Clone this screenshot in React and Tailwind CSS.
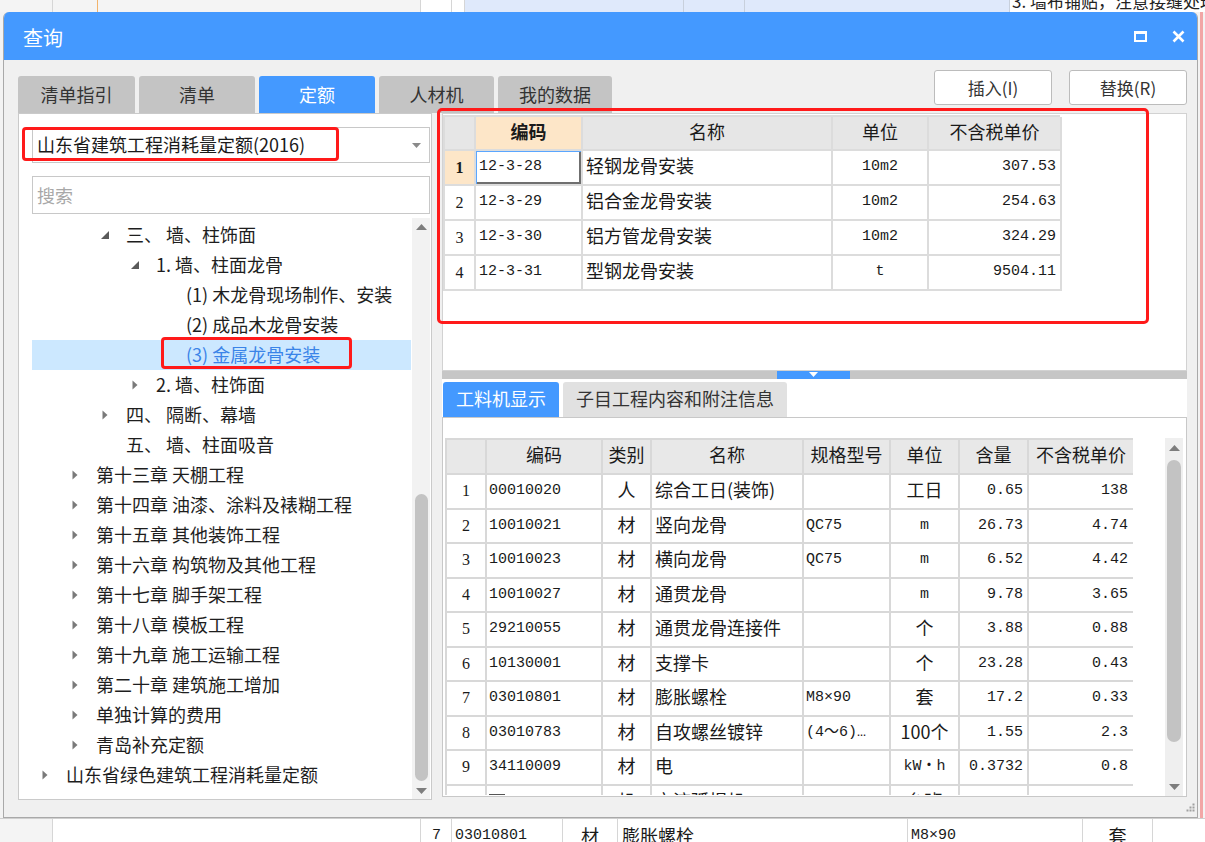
import React from "react";

const treeRows = [
  { l: 2, a: "open", t: "三、 墙、柱饰面" },
  { l: 3, a: "open", t: "1. 墙、柱面龙骨" },
  { l: 4, t: "(1) 木龙骨现场制作、安装" },
  { l: 4, t: "(2) 成品木龙骨安装" },
  { l: 4, t: "(3) 金属龙骨安装", sel: true },
  { l: 3, a: "closed", t: "2. 墙、柱饰面" },
  { l: 2, a: "closed", t: "四、 隔断、幕墙" },
  { l: 2, t: "五、 墙、柱面吸音" },
  { l: 1, a: "closed", t: "第十三章 天棚工程" },
  { l: 1, a: "closed", t: "第十四章 油漆、涂料及裱糊工程" },
  { l: 1, a: "closed", t: "第十五章 其他装饰工程" },
  { l: 1, a: "closed", t: "第十六章 构筑物及其他工程" },
  { l: 1, a: "closed", t: "第十七章 脚手架工程" },
  { l: 1, a: "closed", t: "第十八章 模板工程" },
  { l: 1, a: "closed", t: "第十九章 施工运输工程" },
  { l: 1, a: "closed", t: "第二十章 建筑施工增加" },
  { l: 1, a: "closed", t: "单独计算的费用" },
  { l: 1, a: "closed", t: "青岛补充定额" },
  { l: 0, a: "closed", t: "山东省绿色建筑工程消耗量定额" },
];

const indentCls = ["w-0", "w-[30px]", "w-[60px]", "w-[90px]", "w-[120px]"];

const topRows = [
  ["1", "12-3-28", "轻钢龙骨安装", "10m2", "307.53"],
  ["2", "12-3-29", "铝合金龙骨安装", "10m2", "254.63"],
  ["3", "12-3-30", "铝方管龙骨安装", "10m2", "324.29"],
  ["4", "12-3-31", "型钢龙骨安装", "t", "9504.11"],
];

// [no, code, type, name, spec, unit, unitIsCjk, qty, price]
const matRows = [
  ["1", "00010020", "人", "综合工日(装饰)", "", "工日", true, "0.65", "138"],
  ["2", "10010021", "材", "竖向龙骨", "QC75", "m", false, "26.73", "4.74"],
  ["3", "10010023", "材", "横向龙骨", "QC75", "m", false, "6.52", "4.42"],
  ["4", "10010027", "材", "通贯龙骨", "", "m", false, "9.78", "3.65"],
  ["5", "29210055", "材", "通贯龙骨连接件", "", "个", true, "3.88", "0.88"],
  ["6", "10130001", "材", "支撑卡", "", "个", true, "23.28", "0.43"],
  ["7", "03010801", "材", "膨胀螺栓", "M8×90", "套", true, "17.2", "0.33"],
  ["8", "03010783", "材", "自攻螺丝镀锌", "(4～6)…", "100个", true, "1.55", "2.3"],
  ["9", "34110009", "材", "电", "", "kW・h", false, "0.3732", "0.8"],
  ["10", "99250010", "机", "交流弧焊机", "", "台班", true, "0.034", "1.43"],
];

function OpenArrow() {
  return (
    <svg width="8" height="8" viewBox="0 0 8 8">
      <path d="M8 0 L8 8 L0 8 Z" fill="#5a5a5a" />
    </svg>
  );
}

function ClosedArrow() {
  return (
    <svg width="6" height="10" viewBox="0 0 6 10">
      <path d="M0.5 0.5 L5.5 5 L0.5 9.5 Z" fill="#7a7a7a" />
    </svg>
  );
}

function ScrollArrow({ up }) {
  return (
    <svg width="11" height="6" viewBox="0 0 11 6">
      <path d={up ? "M0 6 L5.5 0 L11 6 Z" : "M0 0 L5.5 6 L11 0 Z"} fill="#7d7d7d" />
    </svg>
  );
}

function TreePanel() {
  return (
    <div className="w-[414px] h-[687px] shrink-0 bg-white border border-[#cacaca] flex flex-col pl-[13px] pr-[1px] pt-[13px]">
      {/* library selector */}
      <div className="relative h-[36px] border border-[#c8c8c8] flex items-center pl-[4px]">
        <span className="text-[18px] leading-none text-[#1a1a1a] whitespace-nowrap pb-[2px]">山东省建筑工程消耗量定额(2016)</span>
        <svg className="ml-auto mr-[8px]" width="9" height="5" viewBox="0 0 9 5">
          <path d="M0 0 L4.5 5 L9 0 Z" fill="#8a8a8a" />
        </svg>
        <div className="absolute -left-[11px] -top-[1px] w-[317px] h-[34px] border-[3px] border-[#ff1a1a] rounded-[4px]" />
      </div>
      <div className="mt-[13px] h-[38px] border border-[#c8c8c8] flex items-center pl-[4px]">
        <span className="text-[18px] leading-none text-[#a8a8a8]">搜索</span>
      </div>
      <div className="mt-[4px] flex-1 flex">
        <div className="w-[379px] pt-[2px]">
          {treeRows.map((r, i) => (
            <div
              key={i}
              className={`relative h-[30px] flex items-center ${r.sel ? "bg-[#cce8ff] text-[#3a84e8]" : "text-[#1e1e1e]"}`}
            >
              <div className={`${indentCls[r.l]} shrink-0`} />
              <div className="w-[26px] shrink-0 flex justify-center">
                {r.a === "open" && <OpenArrow />}
                {r.a === "closed" && <ClosedArrow />}
              </div>
              <span className="ml-[8px] pb-[2px] text-[18px] leading-none whitespace-nowrap">{r.t}</span>
              {r.sel && (
                <div className="absolute left-[129px] -top-[3px] w-[191px] h-[32px] border-[3px] border-[#ff1a1a] rounded-[4px]" />
              )}
            </div>
          ))}
        </div>
        <div className="ml-[1px] w-[18px] bg-[#f2f2f2] flex flex-col items-center">
          <div className="h-[18px] flex items-center justify-center">
            <ScrollArrow up />
          </div>
          <div className="mt-[258px] w-[13px] h-[287px] rounded-full bg-[#c3c3c3]" />
          <div className="mt-auto h-[16px] flex items-center justify-center">
            <ScrollArrow />
          </div>
        </div>
      </div>
    </div>
  );
}

function QuotaTable() {
  const head = "h-[34px] pb-[4px] border-r-2 border-b-2 border-[#dcdcdc] flex items-center justify-center text-[18px] leading-none";
  const cell = "h-[35px] border-r-2 border-b-2 border-[#dcdcdc] flex items-center leading-none";
  return (
    <div className="grid grid-cols-[31px_107px_250px_96px_133px] w-[617px] border-l-2 border-t-2 border-[#dcdcdc] text-[#1a1a1a]">
      <div className={`${head} bg-[#e6e6e6]`} />
      <div className={`${head} bg-[#fde6c8] font-bold`}>编码</div>
      <div className={`${head} bg-[#e6e6e6]`}>名称</div>
      <div className={`${head} bg-[#e6e6e6]`}>单位</div>
      <div className={`${head} bg-[#e6e6e6]`}>不含税单价</div>
      {topRows.map((r, i) => (
        <React.Fragment key={i}>
          <div
            className={`${cell} justify-center text-[16px] font-['Liberation_Serif',serif] ${i === 0 ? "bg-[#fde6c8] font-bold" : "bg-white"}`}
          >
            {r[0]}
          </div>
          <div
            className={`${cell} pl-[3px] pb-[2px] text-[15px] font-['Liberation_Mono',monospace] ${i === 0 ? "shadow-[inset_1px_1px_0_#5aa6ff,inset_-2px_-2px_0_#6f6f6f]" : ""}`}
          >
            {r[1]}
          </div>
          <div className={`${cell} pl-[3px] pb-[5px] text-[18px]`}>{r[2]}</div>
          <div className={`${cell} justify-center pb-[2px] text-[15px] font-['Liberation_Mono',monospace]`}>{r[3]}</div>
          <div className={`${cell} justify-end pr-[4px] pb-[2px] text-[15px] font-['Liberation_Mono',monospace]`}>{r[4]}</div>
        </React.Fragment>
      ))}
    </div>
  );
}

function MaterialTable() {
  const head = "h-[35px] pb-[5px] border-r-2 border-b-2 border-[#d8d8d8] bg-[#e8e8e8] flex items-center justify-center text-[18px] leading-none";
  const cell = "h-[34.5px] border-r-2 border-b-2 border-[#d8d8d8] flex items-center leading-none overflow-hidden whitespace-nowrap";
  const mono = "font-['Liberation_Mono','Noto_Sans_CJK_SC',monospace] text-[15px]";
  return (
    <div className="w-[688px] h-[357px] overflow-hidden">
      <div className="grid grid-cols-[40px_116px_49px_152px_87px_69px_69px_106px] border-l-2 border-t-2 border-[#d8d8d8] text-[#1a1a1a]">
        <div className={head} />
        <div className={head}>编码</div>
        <div className={head}>类别</div>
        <div className={head}>名称</div>
        <div className={head}>规格型号</div>
        <div className={head}>单位</div>
        <div className={head}>含量</div>
        <div className={head}>不含税单价</div>
        {matRows.map((r, i) => (
          <React.Fragment key={i}>
            <div className={`${cell} justify-center text-[16px] font-['Liberation_Serif',serif]`}>{i < 9 ? r[0] : ""}</div>
            <div className={`${cell} pl-[2px] pb-[1px] ${mono}`}>
              {i === 9 && <span className="mr-[6px] w-[16px] h-[14px] border border-[#555] inline-block" />}
              {r[1]}
            </div>
            <div className={`${cell} justify-center pb-[4px] text-[18px]`}>{r[2]}</div>
            <div className={`${cell} pl-[3px] pb-[4px] text-[18px]`}>{r[3]}</div>
            <div className={`${cell} pl-[2px] pb-[1px] ${mono}`}>{r[4]}</div>
            <div className={`${cell} justify-center ${r[6] ? "pb-[4px] text-[18px]" : "pb-[1px] " + mono}`}>{r[5]}</div>
            <div className={`${cell} justify-end pr-[4px] pb-[1px] ${mono}`}>{r[7]}</div>
            <div className={`${cell} justify-end pr-[5px] pb-[1px] ${mono}`}>{r[8]}</div>
          </React.Fragment>
        ))}
      </div>
    </div>
  );
}

function Dialog() {
  return (
    <div className="absolute left-[3px] top-[12px] w-[1195px] h-[806px] flex flex-col bg-[#f0f0f0] border-x border-b border-[#a9a9a9] rounded-t-[6px] overflow-hidden">
      {/* title bar */}
      <div className="h-[48px] shrink-0 bg-[#4499ff] flex items-center pl-[19px] pr-[12px] text-white">
        <span className="text-[20px] leading-none pt-[3px]">查询</span>
        <div className="ml-auto flex items-center gap-[25px]">
          <div className="w-[13px] h-[11px] border-2 border-t-[3px] border-white" />
          <svg width="13" height="13" viewBox="0 0 13 13">
            <path d="M1.5 1.5 L11.5 11.5 M11.5 1.5 L1.5 11.5" stroke="#fff" strokeWidth="2.6" />
          </svg>
        </div>
      </div>

      {/* tabs + action buttons */}
      <div className="h-[53px] shrink-0 flex pl-[14px] pr-[10px]">
        <div className="self-end flex gap-[4px] text-[18px] leading-none">
          <div className="w-[117px] h-[37px] pb-[2px] rounded-t-[3px] bg-[#c4c4c4] text-[#333] flex items-center justify-center">清单指引</div>
          <div className="w-[116px] h-[37px] pb-[2px] rounded-t-[3px] bg-[#c4c4c4] text-[#333] flex items-center justify-center">清单</div>
          <div className="w-[116px] h-[37px] pb-[2px] rounded-t-[3px] bg-[#4499ff] text-white flex items-center justify-center">定额</div>
          <div className="w-[115px] h-[37px] pb-[2px] rounded-t-[3px] bg-[#c4c4c4] text-[#333] flex items-center justify-center">人材机</div>
          <div className="w-[114px] h-[37px] pb-[2px] rounded-t-[3px] bg-[#c4c4c4] text-[#333] flex items-center justify-center">我的数据</div>
        </div>
        <div className="ml-auto mt-[10px] self-start flex gap-[17px] text-[17px] leading-none text-[#333]">
          <div className="w-[118px] h-[35px] bg-white border border-[#bcbcbc] rounded-[3px] flex items-center justify-center">插入(I)</div>
          <div className="w-[118px] h-[35px] bg-white border border-[#bcbcbc] rounded-[3px] flex items-center justify-center">替换(R)</div>
        </div>
      </div>

      {/* main area */}
      <div className="flex pl-[14px] pr-[10px]">
        <TreePanel />
        <div className="ml-[10px] w-[745px] flex flex-col">
          <div className="relative h-[258px] bg-white border border-[#d2d2d2] pt-[1px]">
            <QuotaTable />
            <div className="absolute -left-[6px] -top-[6px] w-[712px] h-[216px] border-[3px] border-[#ff1a1a] rounded-[5px]" />
          </div>
          {/* splitter */}
          <div className="h-[8px] bg-[#c6c6c6] flex">
            <div className="ml-[335px] w-[73px] bg-[#4499ff] flex items-start justify-center pt-[1px]">
              <svg width="9" height="5" viewBox="0 0 9 5">
                <path d="M0 0 L4.5 5 L9 0 Z" fill="#fff" />
              </svg>
            </div>
          </div>
          <div className="h-[418px] bg-white flex flex-col">
            <div className="h-[38px] shrink-0 flex items-end gap-[4px] pl-[1px] text-[18px] leading-none">
              <div className="w-[116px] h-[35px] pb-[3px] rounded-t-[3px] bg-[#4499ff] text-white flex items-center justify-center">工料机显示</div>
              <div className="w-[224px] h-[35px] pb-[3px] rounded-t-[3px] bg-[#e1e1e1] text-[#333] flex items-center justify-center">子目工程内容和附注信息</div>
            </div>
            <div className="flex-1 border border-[#c8c8c8] flex items-start pt-[20px] pl-[2px]">
              <MaterialTable />
              <div className="ml-[32px] w-[18px] h-[358px] bg-[#efefef] flex flex-col items-center">
                <div className="h-[20px] shrink-0 flex items-center justify-center">
                  <ScrollArrow up />
                </div>
                <div className="mt-[2px] w-[14px] h-[282px] rounded-full bg-[#c3c3c3]" />
                <div className="mt-auto h-[18px] flex items-center justify-center">
                  <ScrollArrow />
                </div>
              </div>
            </div>
          </div>
        </div>
      </div>

      {/* resize grip */}
      <svg className="absolute right-[2px] bottom-[5px]" width="10" height="10" viewBox="0 0 10 10">
        <rect x="7.5" y="1.5" width="2" height="2" fill="#a0a0a0" />
        <rect x="4.5" y="4.5" width="2" height="2" fill="#a0a0a0" />
        <rect x="7.5" y="4.5" width="2" height="2" fill="#a0a0a0" />
        <rect x="1.5" y="7.5" width="2" height="2" fill="#a0a0a0" />
        <rect x="4.5" y="7.5" width="2" height="2" fill="#a0a0a0" />
        <rect x="7.5" y="7.5" width="2" height="2" fill="#a0a0a0" />
      </svg>
    </div>
  );
}

export default function App() {
  return (
    <div className="relative w-[1205px] h-[842px] overflow-hidden bg-[#f3f3f3] flex flex-col font-['Noto_Sans_CJK_SC',sans-serif]">
      {/* spreadsheet behind the dialog: top row */}
      <div className="h-[12px] shrink-0 flex">
        <div className="w-[53px] bg-[#f4f4f4] border-r border-[#d6d6d6]" />
        <div className="w-[45px] bg-[#f4f4f4] border-r border-[#f2b36b]" />
        <div className="w-[323px] bg-[#f4f4f4] border-r border-[#d6d6d6]" />
        <div className="w-[31px] bg-white border-r border-[#d6d6d6]" />
        <div className="w-[13px] bg-white border-r border-[#d6d6d6]" />
        <div className="w-[219px] bg-[#dfe9fb] border-r border-[#c8d0dc]" />
        <div className="w-[61px] bg-[#dfe9fb] border-r border-[#c8d0dc]" />
        <div className="w-[265px] bg-[#dfe9fb] border-r border-[#c8d0dc]" />
        <div className="flex-1 bg-white overflow-hidden">
          <div className="-mt-[9px] pl-[2px] text-[17px] leading-[20px] whitespace-nowrap text-[#222]">3. 墙布铺贴，注意接缝处理</div>
        </div>
      </div>
      <div className="flex-1 flex justify-end">
        <div className="w-[3px] mr-[2px] bg-[#f2a6a6]" />
      </div>
      {/* spreadsheet behind the dialog: bottom row */}
      <div className="h-[24px] shrink-0 flex bg-white border-t border-[#cfcfcf] text-[#1a1a1a] leading-none">
        <div className="w-[53px] bg-[#f4f4f4] border-r border-[#d6d6d6]" />
        <div className="w-[368px] border-r border-[#d6d6d6]" />
        <div className="w-[31px] border-r border-[#d6d6d6] pt-[9px] pl-[11px] text-[15px] font-['Liberation_Mono',monospace]">7</div>
        <div className="w-[111px] border-r border-[#d6d6d6] pt-[9px] pl-[3px] text-[15px] font-['Liberation_Mono',monospace]">03010801</div>
        <div className="w-[55px] border-r border-[#d6d6d6] pt-[7px] text-center text-[18px]">材</div>
        <div className="w-[290px] border-r border-[#d6d6d6] pt-[7px] pl-[4px] text-[18px]">膨胀螺栓</div>
        <div className="w-[175px] border-r border-[#d6d6d6] pt-[9px] pl-[3px] text-[15px] font-['Liberation_Mono',monospace]">M8×90</div>
        <div className="w-[70px] border-r border-[#d6d6d6] pt-[7px] text-center text-[18px]">套</div>
        <div className="flex-1" />
      </div>
      <Dialog />
    </div>
  );
}
